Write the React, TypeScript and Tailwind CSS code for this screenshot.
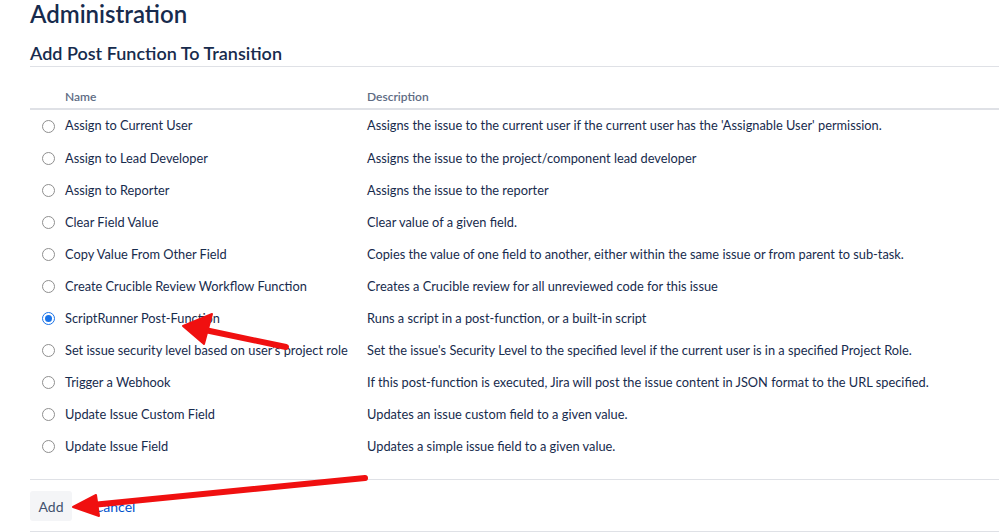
const FONT = { fontFamily: '"Lato", "Open Sans", "Liberation Sans", sans-serif' };

const rows: { name: string; desc: string; checked?: boolean }[] = [
  { name: "Assign to Current User", desc: "Assigns the issue to the current user if the current user has the 'Assignable User' permission." },
  { name: "Assign to Lead Developer", desc: "Assigns the issue to the project/component lead developer" },
  { name: "Assign to Reporter", desc: "Assigns the issue to the reporter" },
  { name: "Clear Field Value", desc: "Clear value of a given field." },
  { name: "Copy Value From Other Field", desc: "Copies the value of one field to another, either within the same issue or from parent to sub-task." },
  { name: "Create Crucible Review Workflow Function", desc: "Creates a Crucible review for all unreviewed code for this issue" },
  { name: "ScriptRunner Post-Function", desc: "Runs a script in a post-function, or a built-in script", checked: true },
  { name: "Set issue security level based on user's project role", desc: "Set the issue's Security Level to the specified level if the current user is in a specified Project Role." },
  { name: "Trigger a Webhook", desc: "If this post-function is executed, Jira will post the issue content in JSON format to the URL specified." },
  { name: "Update Issue Custom Field", desc: "Updates an issue custom field to a given value." },
  { name: "Update Issue Field", desc: "Updates a simple issue field to a given value." },
];

function Radio({ checked }: { checked?: boolean }) {
  if (checked) {
    return (
      <span className="flex h-[13px] w-[13px] items-center justify-center rounded-full border-[1.5px] border-[#1a73e8] bg-white">
        <span className="h-[7px] w-[7px] rounded-full bg-[#1a73e8]" />
      </span>
    );
  }
  return <span className="block h-[13px] w-[13px] rounded-full border border-[#8f8f8f] bg-white" />;
}

export default function App() {
  return (
    <div className="relative h-[532px] w-[999px] overflow-hidden bg-white text-[#172b4d]" style={FONT}>
      <div className="pl-[30px]">
        <h1 className="text-[24px] font-semibold leading-[28px]">Administration</h1>

        <h2 className="mt-[14px] border-b border-[#dfe1e6] pb-[2px] text-[18px] font-semibold leading-[22px]">
          Add Post Function To Transition
        </h2>

        <div className="flex h-[43px] items-end border-b-2 border-[#dfe1e6] pb-[3px] text-[12px] font-semibold leading-[16px] text-[#5e6c84]">
          <div className="w-[35px]" />
          <div className="w-[302px]">Name</div>
          <div>Description</div>
        </div>

        <div>
          {rows.map((r) => (
            <div key={r.name} className="flex h-[32.1px] items-center text-[12.8px] text-[#172b4d]">
              <div className="flex w-[35px] justify-start pl-[12px]">
                <Radio checked={r.checked} />
              </div>
              <div className="w-[302px] whitespace-nowrap">{r.name}</div>
              <div className="whitespace-nowrap">{r.desc}</div>
            </div>
          ))}
        </div>

        <div className="mt-[16px] border-y border-[#dfe1e6] pt-[11px] pb-[10px]">
          <div className="flex items-center gap-[22px]">
            <button className="h-[30px] w-[42px] rounded-[3px] bg-[#f4f5f7] text-[14px] text-[#42526e]">Add</button>
            <a className="text-[14px] text-[#0052cc]">Cancel</a>
          </div>
        </div>
      </div>

      <svg className="pointer-events-none absolute left-0 top-0" width="999" height="532">
        <g fill="#f01010" stroke="#f01010" strokeLinecap="round" strokeLinejoin="round">
          <line x1="286" y1="347" x2="205" y2="330" strokeWidth="6" />
          <polygon points="183,326 212,314 204,344" strokeWidth="2" />
          <line x1="365" y1="478" x2="92" y2="505" strokeWidth="6" />
          <polygon points="73,507 96,495 99,516" strokeWidth="2" />
        </g>
      </svg>
    </div>
  );
}
